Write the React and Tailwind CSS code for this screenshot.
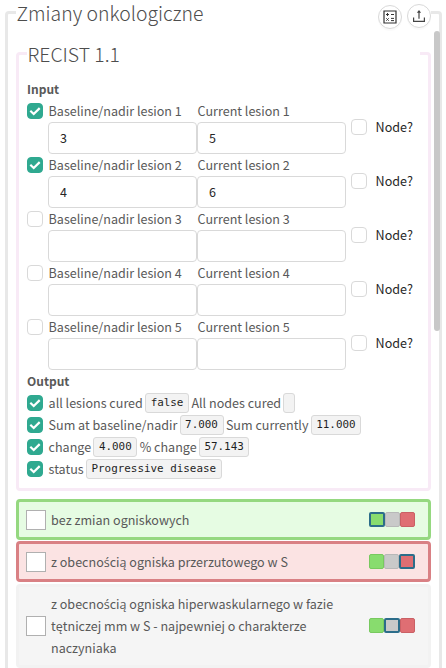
import React, { useState } from "react";
import clsx from "clsx";

/* ================= DATA ================= */
const initialLesions = [
  { id: 1, used: true, baseline: "3", current: "5", node: false },
  { id: 2, used: true, baseline: "4", current: "6", node: false },
  { id: 3, used: false, baseline: "", current: "", node: false },
  { id: 4, used: false, baseline: "", current: "", node: false },
  { id: 5, used: false, baseline: "", current: "", node: false },
];

const outputs = [
  [
    { label: "all lesions cured", value: "false" },
    { label: "All nodes cured", value: "" },
  ],
  [
    { label: "Sum at baseline/nadir", value: "7.000" },
    { label: "Sum currently", value: "11.000" },
  ],
  [
    { label: "change", value: "4.000" },
    { label: "% change", value: "57.143" },
  ],
  [{ label: "status", value: "Progressive disease" }],
];

const initialFindings = [
  { text: "bez zmian ogniskowych", state: "yes" },
  { text: "z obecnością ogniska przerzutowego w S", state: "no" },
  {
    text: "z obecnością ogniska hiperwaskularnego w fazie tętniczej mm w S - najpewniej o charakterze naczyniaka",
    state: "none",
  },
];

const findingStyles = {
  yes: "h-[41px] border-[#95d880] bg-[#e6fce3]",
  no: "mt-px h-[41px] border-[#d98084] bg-[#fbe3e3]",
  none: "mt-[2px] h-[84px] border-[#f2f2f2] bg-[#f5f5f5]",
};

const swatches = [
  { state: "yes", color: "bg-[#88dc6e]", border: "border-[#78c95f]" },
  { state: "none", color: "bg-[#c9c9c9]", border: "border-[#b8b8b8]" },
  { state: "no", color: "bg-[#df6e73]", border: "border-[#ca6065]" },
];

/* ================= SMALL PARTS ================= */
// the CJK face misplaces Polish accents, so those letters use Open Sans
const PolishText = ({ children }) =>
  children.split(/([ąćęłńóśźż]+)/).map((part, i) =>
    i % 2 ? (
      <span key={i} className="font-['Open_Sans',sans-serif] leading-none">
        {part}
      </span>
    ) : (
      part
    )
  );

const Checkbox = ({ checked, onChange }) => (
  <button
    type="button"
    role="checkbox"
    aria-checked={checked}
    onClick={() => onChange?.(!checked)}
    className={clsx(
      "flex size-4 shrink-0 items-center justify-center rounded-[4px] border",
      checked ? "border-[#2fa990] bg-[#2fa990]" : "border-[#d9d9d9] bg-white"
    )}
  >
    {checked && (
      <svg width="12" height="12" viewBox="0 0 12 12" fill="none" className="shrink-0">
        <path d="M1.3 5.8 4.7 9 10.7 3.1" stroke="#fff" strokeWidth="2.2" />
      </svg>
    )}
  </button>
);

const RoundButton = ({ className, children }) => (
  <button
    type="button"
    className={clsx(
      "flex size-6 shrink-0 items-center justify-center rounded-full border border-[#d9d9d9] bg-white shadow-[0_2px_0_rgba(0,0,0,0.02)]",
      className
    )}
  >
    {children}
  </button>
);

const NumberField = ({ label, value, onChange, className }) => (
  <label className={clsx("block w-[149px]", className)}>
    <span className="block h-[22px] pl-[0.6px] whitespace-nowrap">{label}</span>
    <input
      value={value}
      onChange={(e) => onChange(e.target.value)}
      className="block h-8 w-full rounded-[4px] border border-[#d9d9d9] bg-white px-[11px] pb-px text-[#262626] outline-none"
    />
  </label>
);

/* ================= PAGE ================= */
const App = () => {
  const [lesions, setLesions] = useState(initialLesions);
  const [findings, setFindings] = useState(initialFindings);

  const updateLesion = (id, patch) => {
    setLesions(lesions.map((l) => (l.id === id ? { ...l, ...patch } : l)));
  };

  const setState = (index, state) => {
    setFindings(findings.map((f, i) => (i === index ? { ...f, state } : f)));
  };

  return (
    <div className="relative h-[668px] w-[446px] overflow-hidden bg-white font-['Noto_Sans_CJK_SC','Open_Sans',sans-serif] text-[12.55px] leading-[22px] text-[#595959]">
      <fieldset className="mr-1 ml-[5px] h-[720px] min-w-0 rounded-[4px] border-[3px] border-[#e8e8e8] px-2">
        <legend className="flex h-[25px] w-full items-start">
          <span className="flex-1 pl-[0.5px] text-[19.4px] leading-[26px] font-light text-[#4d4d4d]">
            Zmiany onkologiczne
          </span>
          <RoundButton className="mt-[5px] mr-[5px]">
            <svg width="14" height="14" viewBox="0 0 14 14" fill="none" stroke="#333" strokeWidth="1.2">
              <path d="M1 1h12v12H1z" />
              <path d="M3 4.5h3M4.5 3v3M8 4.5h3M3.3 8.3l2.4 2.4M5.7 8.3l-2.4 2.4M8 8.4h3M8 10.6h3" strokeWidth="1" />
            </svg>
          </RoundButton>
          <RoundButton className="mt-1">
            <svg width="14" height="14" viewBox="0 0 14 14" fill="none" stroke="#444" strokeWidth="1.2">
              <path d="M1.6 8.5v3.9h10.8V8.5M7 9.7V2" />
              <path d="M7 1 9.1 3.8H4.9z" fill="#444" stroke="none" />
            </svg>
          </RoundButton>
        </legend>

        {/* ================= RECIST ================= */}
        <fieldset className="mt-3 min-w-0 rounded-[4px] border-[3px] border-[#f8eaf6] px-2 pt-2 pb-2">
          <legend className="h-[33px] w-full pl-[0.5px] text-[19.4px] leading-[33px] font-light text-[#4d4d4d]">
            RECIST 1.1
          </legend>

          <div className="text-xs leading-[22px] font-bold">Input</div>
          {lesions.map((lesion) => (
            <div key={lesion.id} className="flex h-[54px] items-start">
              <div className="mt-[3px] mr-[5px]">
                <Checkbox checked={lesion.used} onChange={(used) => updateLesion(lesion.id, { used })} />
              </div>
              <NumberField
                label={`Baseline/nadir lesion ${lesion.id}`}
                value={lesion.baseline}
                onChange={(baseline) => updateLesion(lesion.id, { baseline })}
              />
              <NumberField
                label={`Current lesion ${lesion.id}`}
                value={lesion.current}
                onChange={(current) => updateLesion(lesion.id, { current })}
              />
              <div className="mt-4 ml-[5px] flex items-center gap-[8.6px] text-[#262626]">
                <Checkbox checked={lesion.node} onChange={(node) => updateLesion(lesion.id, { node })} />
                Node?
              </div>
            </div>
          ))}

          <div className="text-xs leading-[22px] font-bold">Output</div>
          {outputs.map((row, i) => (
            <div key={i} className="flex h-[22px] items-center whitespace-nowrap">
              <div className="mr-[5.6px]">
                <Checkbox checked />
              </div>
              {row.map((item) => (
                <React.Fragment key={item.label}>
                  <span>{item.label}</span>
                  <code className="mr-[2.4px] ml-[2.2px] h-5 rounded-[3px] border border-[#d9d9d9] bg-[#f3f3f3] px-[4.6px] font-['DejaVu_Sans_Mono',monospace] text-[10.9px] leading-[17px] text-[#1f1f1f]">
                    {item.value}
                  </code>
                </React.Fragment>
              ))}
            </div>
          ))}
        </fieldset>

        {/* ================= FINDINGS ================= */}
        <div className="mt-2">
          {findings.map((finding, index) => (
            <div
              key={finding.text}
              className={clsx(
                "flex items-center rounded-[4px] border-[3px] pr-[13px] pl-[7px]",
                findingStyles[finding.state]
              )}
            >
              <div className="size-5 shrink-0 border border-[#b0b0b0] bg-white" />
              <div className="ml-[5px] w-[300px]">
                <PolishText>{finding.text}</PolishText>
              </div>
              <div className="ml-auto flex h-4 items-start">
                {swatches.map((s) => (
                  <button
                    key={s.state}
                    type="button"
                    aria-label={s.state}
                    onClick={() => setState(index, s.state)}
                    className={clsx(
                      "h-[15px] rounded-[2px]",
                      s.color,
                      s.state === finding.state ? "w-4 border-2 border-[#2c6d8a]" : clsx("w-[15px] border", s.border)
                    )}
                  />
                ))}
              </div>
            </div>
          ))}
        </div>
      </fieldset>

      {/* scrollbar thumb */}
      <div className="absolute top-[31px] left-[434px] h-[300px] w-[6px] rounded-[3px] bg-[#c8c8c8]" />
    </div>
  );
};

export default App;
